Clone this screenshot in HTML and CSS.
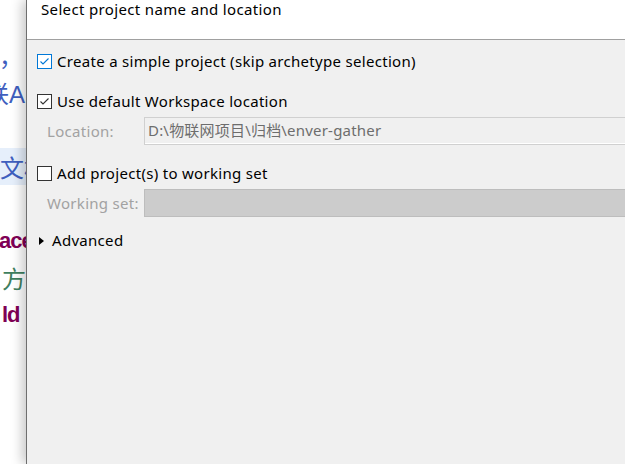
FILE: index.html
```html
<!DOCTYPE html>
<html lang="en">
<head>
<meta charset="utf-8">
<title>Select project name and location</title>
<link rel="stylesheet" href="styles.css">
</head>
<body>
<div class="screen">
  <div class="editor">
    <div class="line"></div>
    <div class="line"><span class="jd t-comma">，（默认</span></div>
    <div class="line"><span class="jd t-api">联API</span></div>
    <div class="line"></div>
    <div class="line current"><span class="jd t-wen">文档</span></div>
    <div class="line"></div>
    <div class="line"><span class="kw t-ace">ace</span></div>
    <div class="line"><span class="cm t-fang">方法</span></div>
    <div class="line"><span class="kw t-ld">ld</span></div>
  </div>
  <div class="dialog">
    <div class="header">
      <span class="title">Select project name and location</span>
    </div>
    <div class="body">
      <div class="check-row first">
        <span class="cb cb-focus"><svg width="13" height="13" viewBox="0 0 13 13"><polyline points="2.5,6.5 5,9 10.5,3.5" fill="none" stroke="#0078d7" stroke-width="1.1"/></svg></span>
        <span class="check-label">Create a simple project (skip archetype selection)</span>
      </div>
      <div class="check-row second">
        <span class="cb"><svg width="13" height="13" viewBox="0 0 13 13"><polyline points="2.5,6.5 5,9 10.5,3.5" fill="none" stroke="#333" stroke-width="1.1"/></svg></span>
        <span class="check-label">Use default Workspace location</span>
      </div>
      <div class="field-row near">
        <span class="field-label">Location:</span>
        <div class="text-input">D:\物联网项目\归档\enver-gather</div>
      </div>
      <div class="check-row third">
        <span class="cb"></span>
        <span class="check-label">Add project(s) to working set</span>
      </div>
      <div class="field-row near">
        <span class="field-label">Working set:</span>
        <div class="combo"></div>
      </div>
      <div class="adv-row">
        <span class="tri"></span>
        <span class="adv-label">Advanced</span>
      </div>
    </div>
  </div>
</div>
</body>
</html>
```
FILE: styles.css
```css
html, body {
  margin: 0;
  padding: 0;
  background: #f0f0f0;
}
.screen {
  display: flex;
  width: 625px;
  height: 464px;
  overflow: hidden;
}
.editor {
  width: 26px;
  flex: none;
  background: #fff;
  overflow: hidden;
  display: flex;
  flex-direction: column;
  font-family: "Liberation Sans", "Noto Sans CJK SC", sans-serif;
  font-size: 24px;
}
.line {
  height: 37px;
  flex: none;
  display: flex;
  align-items: center;
  white-space: nowrap;
}
.line.current {
  background: #e6effb;
}
.jd { color: #3f5fbf; }
.kw { color: #7f0055; font-weight: bold; font-size: 22px; letter-spacing: -1px; }
.cm { color: #3f7f5f; }
.t-comma { margin-left: -1px; }
.t-api { margin-left: -15px; }
.t-wen { margin-left: 0; }
.t-ace { margin-left: -1px; }
.t-fang { margin-left: 2px; }
.t-ld { margin-left: 2px; }

.dialog {
  flex: 1;
  position: relative;
  z-index: 1;
  border-left: 1px solid #6e6e6e;
  background: #f0f0f0;
  box-shadow: -4px 0 11px rgba(0, 0, 0, 0.22);
  font-family: "Noto Sans", "Noto Sans CJK SC", sans-serif;
  font-size: 15px;
  letter-spacing: 0.3px;
  color: #000;
  display: flex;
  flex-direction: column;
  min-width: 0;
}
.header {
  height: 39px;
  background: #fff;
  border-bottom: 1px solid #a0a0a0;
  padding-left: 14px;
  line-height: 18px;
  flex: none;
}
.title {
  display: block;
  letter-spacing: 0.35px;
}
.body {
  display: flex;
  flex-direction: column;
  padding-top: 11px;
  padding-left: 10px;
}
.check-row {
  height: 21px;
  line-height: 21px;
  display: flex;
  align-items: center;
}
.check-row.second { margin-top: 19px; }
.check-row.third { margin-top: 18px; }
.cb {
  width: 13px;
  height: 13px;
  border: 1px solid #333;
  background: #fff;
  flex: none;
  display: flex;
}
.cb-focus {
  border-color: #0078d7;
}
.check-label {
  margin-left: 5px;
  white-space: nowrap;
}
.field-row {
  display: grid;
  grid-template-columns: 97px 1fr;
  height: 28px;
  align-items: center;
  margin-left: 10px;
  margin-right: -3px;
}
.field-row.near { margin-top: 5px; }
.field-label {
  color: #a2a2a2;
  white-space: nowrap;
}
.text-input {
  height: 26px;
  line-height: 25px;
  border: 1px solid #d0d0d0;
  box-shadow: inset 0 -1px 0 #fff;
  background: #f0f0f0;
  color: #6d6d6d;
  padding-left: 3px;
  white-space: nowrap;
  letter-spacing: 0.2px;
}
.combo {
  height: 26px;
  border: 1px solid #bdbdbd;
  background: #cccccc;
}
.adv-row {
  margin-top: 13px;
  height: 21px;
  line-height: 21px;
  display: flex;
  align-items: center;
  padding-left: 2px;
}
.tri {
  width: 0;
  height: 0;
  border-top: 4px solid transparent;
  border-bottom: 4px solid transparent;
  border-left: 5px solid #000;
  flex: none;
}
.adv-label {
  margin-left: 8px;
}
```
